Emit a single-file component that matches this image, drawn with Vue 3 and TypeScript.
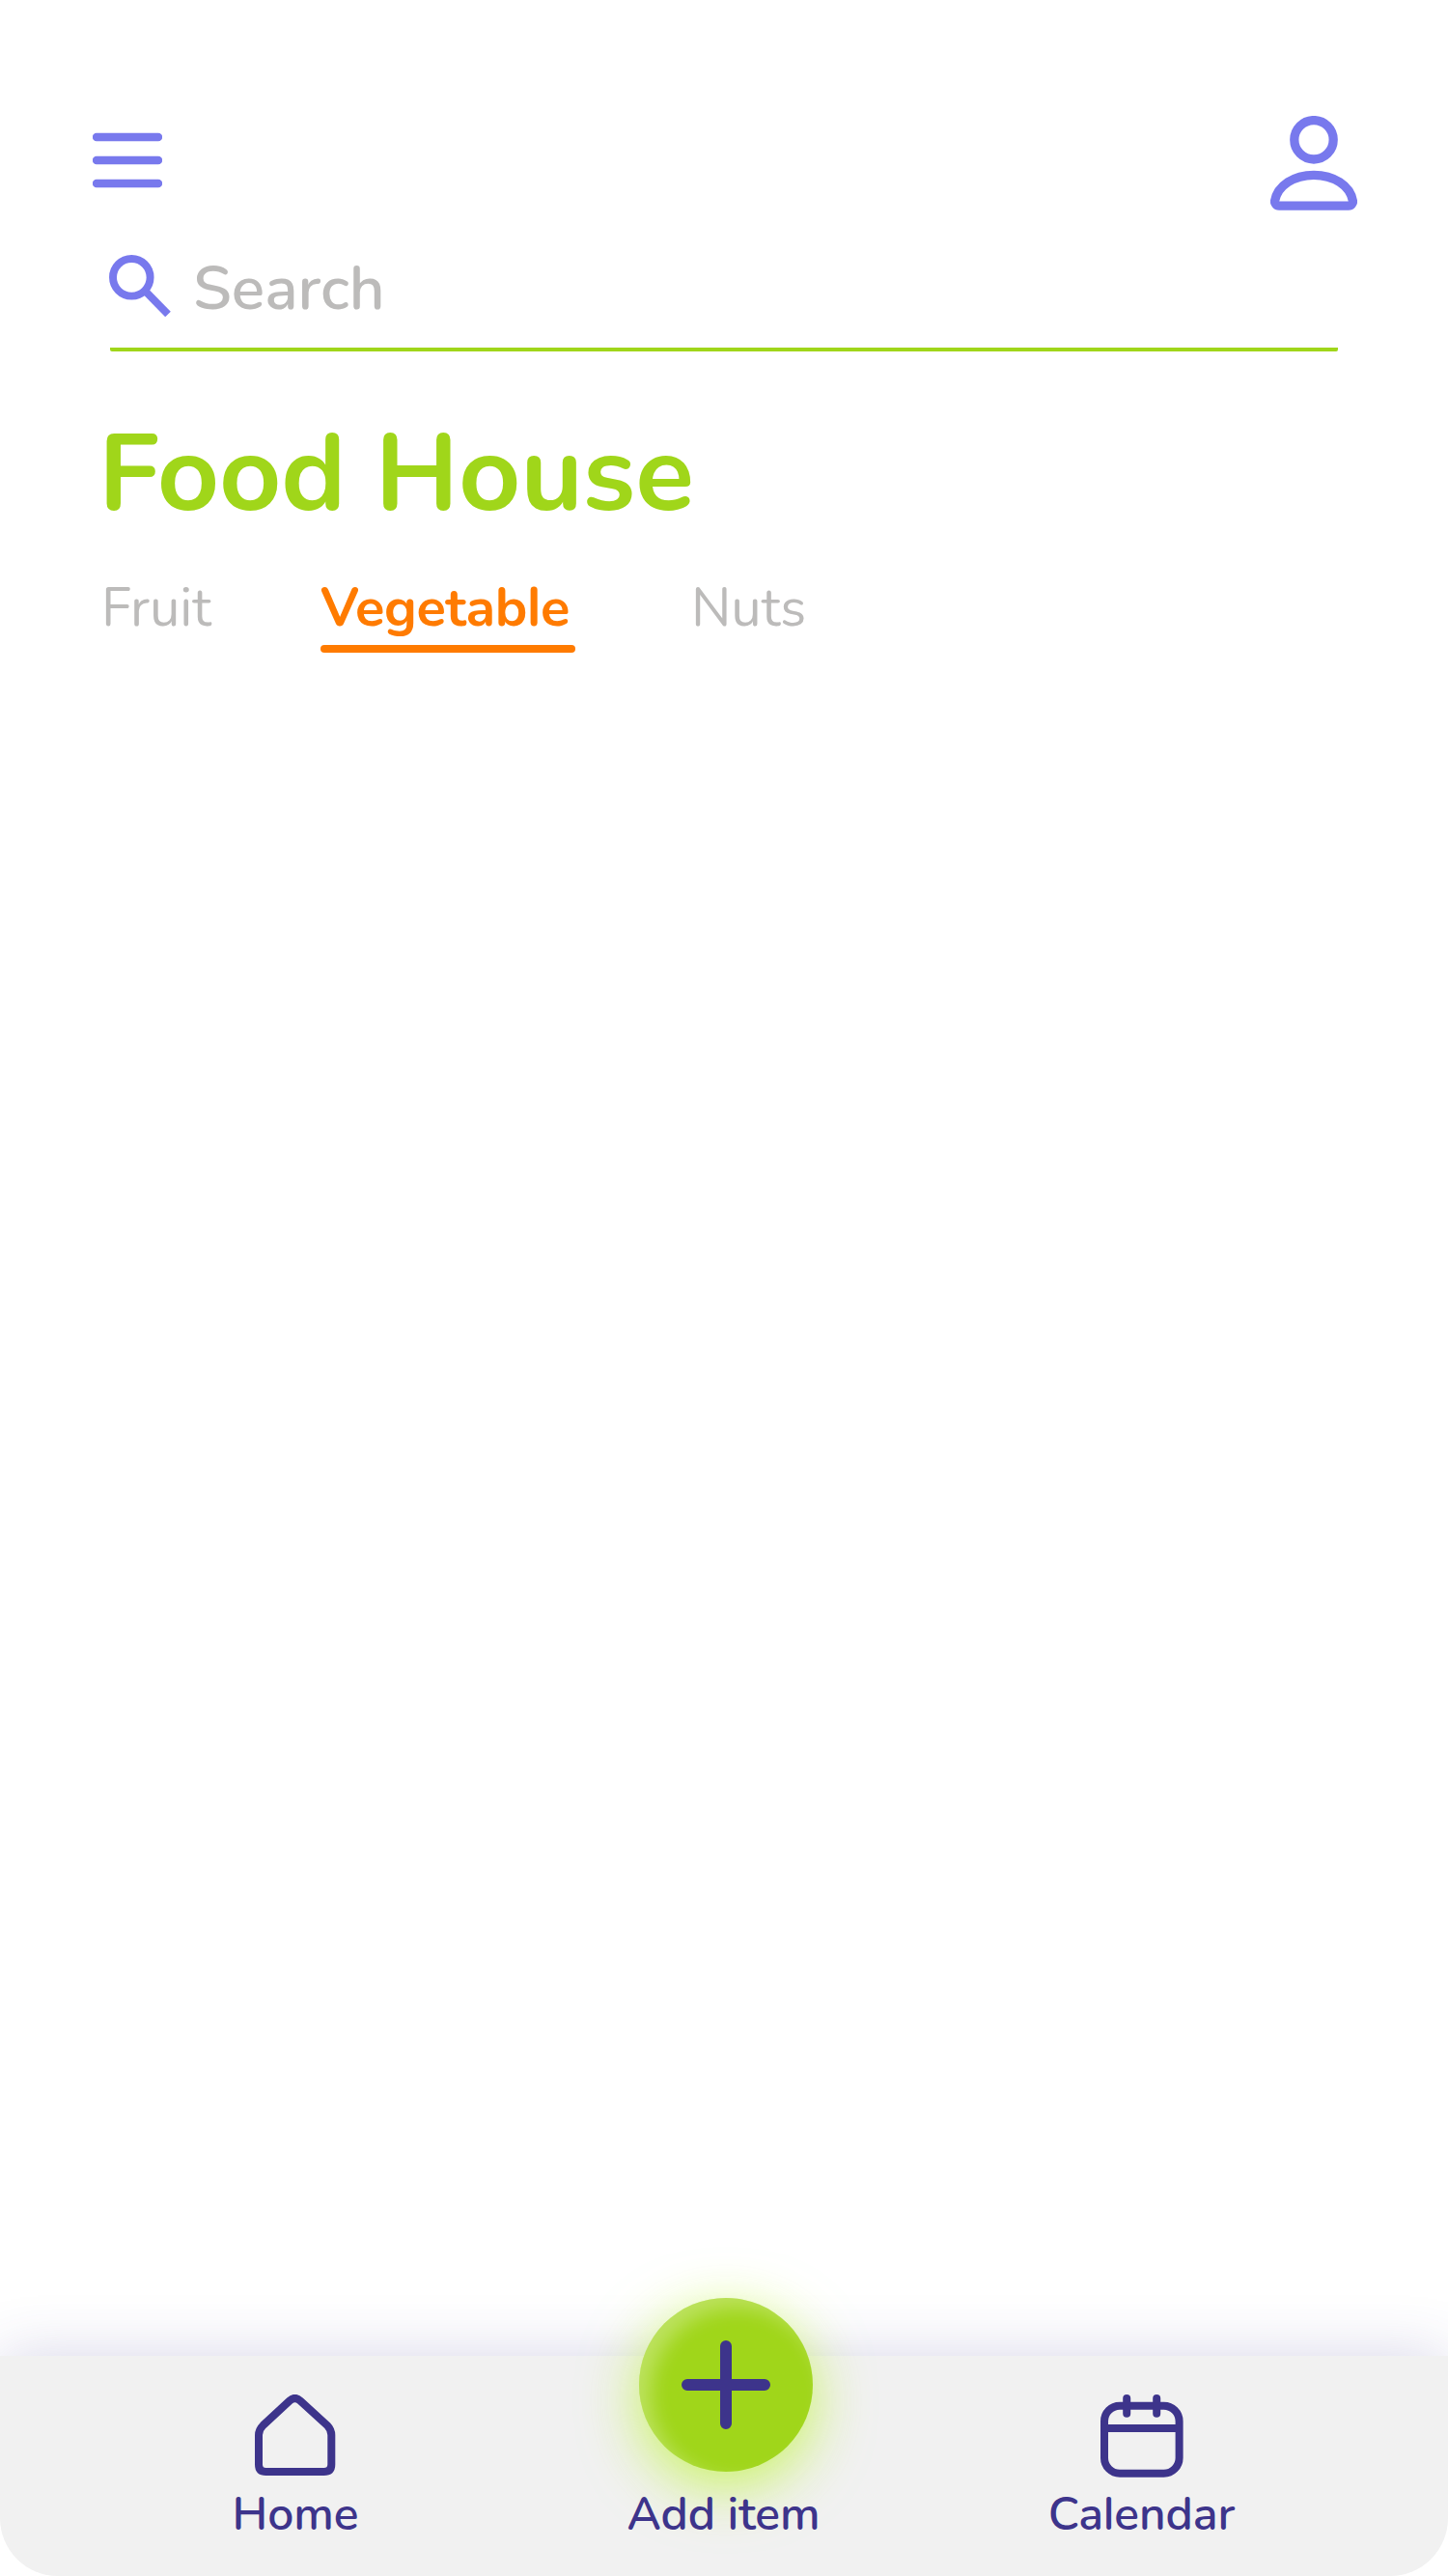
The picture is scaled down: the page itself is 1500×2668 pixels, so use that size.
<script setup lang="ts">
import { ref } from 'vue'

interface Tab {
  id: string
  label: string
}

const tabs: Tab[] = [
  { id: 'fruit', label: 'Fruit' },
  { id: 'vegetable', label: 'Vegetable' },
  { id: 'nuts', label: 'Nuts' },
]

const active = ref('vegetable')
</script>

<template>
  <div class="screen">
    <header class="top">
      <svg class="menu" viewBox="0 0 72 58" aria-label="Menu">
        <path d="M4 5h64M4 29h64M4 53h64" />
      </svg>
      <svg class="person" viewBox="0 0 90 98" aria-label="Profile">
        <circle cx="45" cy="24.8" r="20.2" />
        <path d="M9 93.2H81A4.5 4.5 0 0 0 85.4 88C82.5 72 65.5 61.3 45 61.3S7.5 72 4.6 88A4.5 4.5 0 0 0 9 93.2Z" />
      </svg>
    </header>

    <label class="search">
      <svg class="lens" viewBox="0 0 64 64">
        <circle cx="23.3" cy="23.3" r="19.3" />
        <path d="M37.5 37.5 61 61.5" />
      </svg>
      <span class="hint">Search</span>
    </label>

    <h1 class="title">Food House</h1>

    <nav class="tabs">
      <button
        v-for="tab in tabs"
        :key="tab.id"
        :class="['tab', tab.id, { active: tab.id === active }]"
        @click="active = tab.id"
      >
        {{ tab.label }}
      </button>
    </nav>

    <div class="dock">
      <footer class="bar">
        <div class="item home">
          <svg class="icon" viewBox="0 0 84 88">
            <path d="M4 42Q4 36.5 8.5 32L36 6.5Q41.5 1.5 47 6.5L75 32Q79.3 36.5 79.3 42V72.5Q79.3 80 71.5 80H11.5Q4 80 4 72.5Z" />
          </svg>
          <span>Home</span>
        </div>
        <div class="item add">
          <button class="plus" aria-label="Add item">
            <svg viewBox="0 0 92 92"><path d="M46 6v80M6 46h80" /></svg>
          </button>
          <span>Add item</span>
        </div>
        <div class="item calendar">
          <svg class="icon" viewBox="0 0 86 88">
            <rect x="4" y="11.7" width="77.6" height="70" rx="16" />
            <path d="M4 35H81M27.2 4V19.8M58.2 4V19.8" />
          </svg>
          <span>Calendar</span>
        </div>
      </footer>
    </div>
  </div>
</template>

<style>
body {
  background: #fff;
}
</style>

<style scoped>
.screen {
  display: flex;
  flex-direction: column;
  width: 1500px;
  height: 2668px;
  overflow: hidden;
  background: #fff;
  font-family: Nunito, Lato, sans-serif;
  /* straight lowercase l */
  font-feature-settings: 'ss02' 1;
}

button {
  padding: 0;
  border: 0;
  background: none;
  font: inherit;
  font-feature-settings: inherit;
  color: inherit;
}

svg {
  display: block;
  flex: none;
  fill: none;
}

.top {
  display: flex;
  justify-content: space-between;
  padding: 120px 94px 0 96px;
  height: 98px;
  stroke: #7879ed;
}

.menu {
  width: 72px;
  height: 58px;
  margin-top: 16.7px;
  stroke-width: 8.3;
  stroke-linecap: round;
}

.person {
  width: 90px;
  height: 98px;
  stroke-width: 9.3;
}

.search {
  display: flex;
  height: 100px;
  margin: 42px 114px 0;
  border-bottom: 4px solid #a0d61a;
  border-radius: 2px;
}

.lens {
  width: 64px;
  height: 64px;
  margin: 4px 0 0 -1px;
  stroke: #7879ed;
  stroke-width: 7.9;
}

.hint {
  margin: 3px 0 0 23px;
  font-size: 64px;
  font-weight: 600;
  line-height: 72px;
  color: #bcbbba;
}

.title {
  margin: 68px 0 0 102px;
  font-size: 112px;
  font-weight: 700;
  line-height: 120px;
  letter-spacing: -0.2px;
  color: #a0d61a;
}

.tabs {
  display: flex;
  margin: 45px 0 0 105px;
}

.tab {
  height: 79px;
  padding-bottom: 5px;
  border-bottom: 8px solid transparent;
  box-sizing: border-box;
  font-size: 56px;
  line-height: 66px;
  letter-spacing: -0.1px;
  text-align: left;
  white-space: nowrap;
  color: #bcbbba;
}

.fruit {
  width: 227px;
}

.vegetable {
  width: 264px;
  margin-right: 120px;
}

.tab.active {
  position: relative;
  font-weight: 700;
  letter-spacing: -0.35px;
  color: #ff7b00;
}

.tab.active::after {
  content: '';
  position: absolute;
  left: 0;
  right: 0;
  bottom: -8px;
  height: 8px;
  border-radius: 4px;
  background: #ff7b00;
}

.dock {
  margin-top: auto;
  background: #fff;
  box-shadow: 0 0 60px rgba(61, 52, 139, 0.2);
}

.bar {
  display: flex;
  align-items: flex-start;
  height: 228px;
  border-radius: 0 0 60px 60px;
  background: #f1f1f1;
  color: #3d348b;
  font-size: 48px;
  font-weight: 600;
  line-height: 56px;
  letter-spacing: -0.1px;
}

.item {
  display: flex;
  flex-direction: column;
  align-items: center;
  padding-top: 40px;
  white-space: nowrap;
}

.home {
  width: 611px;
}

.home span {
  margin-left: 1px;
}

.add {
  width: 282px;
  padding-top: 0;
}

.add span {
  margin-right: 5px;
}

.calendar {
  width: 580px;
}

.calendar span {
  margin-right: 1px;
}

.icon {
  width: auto;
  height: 88px;
  margin-bottom: 8px;
  stroke: #3d348b;
  stroke-width: 8;
  stroke-linecap: round;
}

.plus {
  display: grid;
  place-items: center;
  width: 180px;
  height: 180px;
  margin: -60px 0 16px;
  border-radius: 50%;
  background: #a0d61a;
  box-shadow:
    0 16px 60px rgba(180, 245, 20, 0.65),
    inset 12px 10px 20px rgba(255, 255, 255, 0.3);
}

.plus svg {
  width: 92px;
  height: 92px;
  stroke: #3d348b;
  stroke-width: 12;
  stroke-linecap: round;
}
</style>
